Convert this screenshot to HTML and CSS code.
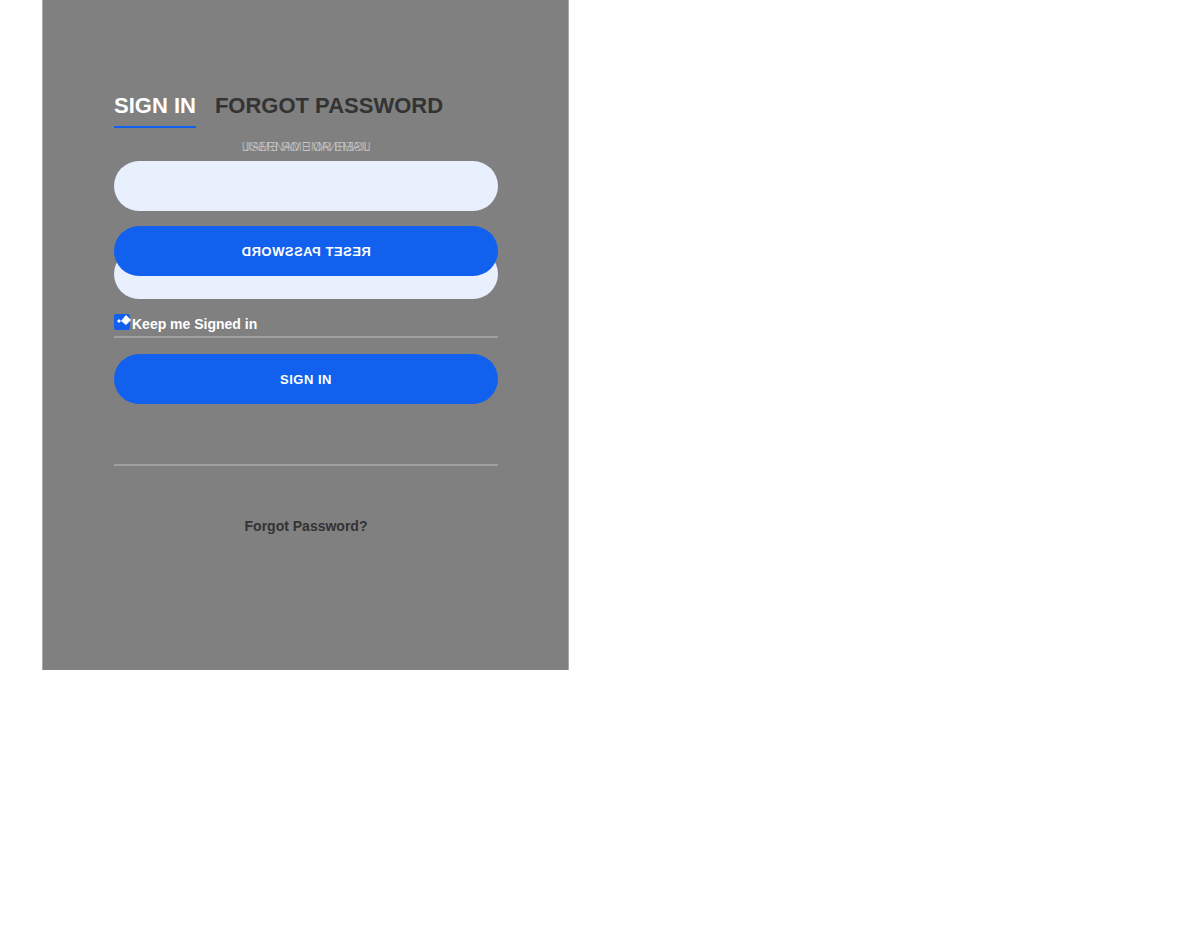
FILE: index.html
```html
<!DOCTYPE html>
<html lang="en">

<head>
  <meta charset="UTF-8">
  <meta name="viewport" content="width=device-width, initial-scale=1.0">
  <title>Login</title>
  <link rel="stylesheet" href="styles.css">
</head>

<body>
  <div class="login-wrap">
    <div class="login-html">
      <div class="tabs">
        <span class="tab tab--active">SIGN IN</span>
        <span class="tab">FORGOT PASSWORD</span>
      </div>

      <div class="login-form">
        <div class="group">
          <label class="label">
            <span>USERNAME OR EMAIL</span>
            <span class="label__back">USERNAME OR EMAIL</span>
          </label>
          <input class="input" type="text">
        </div>

        <div class="group group--stacked">
          <input class="input" type="password">
          <button class="button button--back">RESET PASSWORD</button>
        </div>

        <div class="check">
          <svg class="check__box" width="18" height="18" viewBox="0 0 18 18">
            <rect x="0" y="2" width="16" height="16" rx="2" fill="#1161ee" />
            <path d="M3 9 L5 7 L7 9 L5 11 Z" fill="#fff" />
            <path d="M7 9 L12 3 L17 8 L12 13 Z" fill="#fff" />
          </svg>
          <span>Keep me Signed in</span>
        </div>

        <div class="hr"></div>

        <button class="button">SIGN IN</button>

        <div class="hr hr--wide"></div>

        <div class="foot-lnk">
          <a href="#forgot">Forgot Password?</a>
        </div>
      </div>
    </div>
  </div>
</body>

</html>
```

FILE: styles.css
```css
body {
  margin: 0;
  background-color: #fff;
  font-family: 'Liberation Sans', Arial, sans-serif;
}

.login-wrap {
  margin-left: 42px;
  width: 525px;
  height: 670px;
  background-color: #808080;
  border-left: 1px solid #a9a9a9;
  border-right: 1px solid #a9a9a9;
}

.login-html {
  padding: 93px 70px 0 71px;
}

.tabs {
  display: flex;
  gap: 19px;
}

.tab {
  font-size: 22px;
  font-weight: bold;
  line-height: 25px;
  color: #333;
  padding-bottom: 8px;
  border-bottom: 2px solid transparent;
}

.tab--active {
  color: #fff;
  border-bottom-color: #1161ee;
}

.login-form {
  display: flex;
  flex-direction: column;
}

.group {
  display: flex;
  flex-direction: column;
}

.label {
  position: relative;
  align-self: center;
  margin-top: 12px;
  margin-bottom: 7px;
  font-size: 12px;
  line-height: 14px;
  color: rgba(220, 220, 220, 0.55);
}

.label__back {
  position: absolute;
  left: 0;
  top: 0;
  transform: scaleX(-1);
}

.input {
  box-sizing: border-box;
  height: 50px;
  border: 0;
  border-radius: 25px;
  background-color: #e8f0fe;
  padding: 0 20px;
}

.group--stacked {
  position: relative;
  margin-top: 38px;
}

.button {
  height: 50px;
  border: 0;
  border-radius: 25px;
  background-color: #1161ee;
  color: #fff;
  font-family: 'Liberation Sans', Arial, sans-serif;
  font-size: 13px;
  font-weight: bold;
  letter-spacing: 0.5px;
  cursor: pointer;
}

.button--back {
  position: absolute;
  left: 0;
  right: 0;
  top: -23px;
  transform: scaleX(-1);
}

.check {
  display: flex;
  align-items: center;
  margin-top: 14px;
  height: 22px;
  color: #fff;
  font-size: 14px;
  font-weight: bold;
}

.check__box {
  overflow: visible;
  margin-top: -6px;
}

.hr {
  height: 2px;
  background-color: rgba(255, 255, 255, 0.25);
  margin: 1px 0 16px;
}

.hr--wide {
  margin: 60px 0 52px;
}

.foot-lnk {
  text-align: center;
  font-size: 14px;
  font-weight: bold;
}

.foot-lnk a {
  color: #333;
  text-decoration: none;
}
```
